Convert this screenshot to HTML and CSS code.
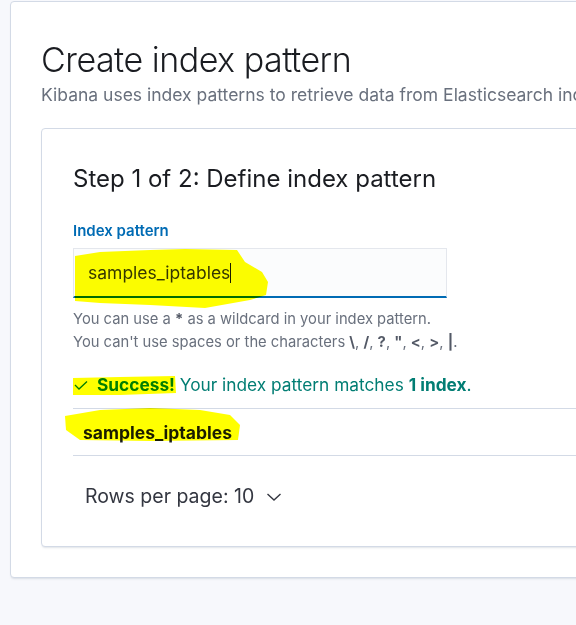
FILE: index.html
```html
<!DOCTYPE html>
<html>
<head>
<meta charset="utf-8">
<link rel="stylesheet" href="styles.css">
</head>
<body>
<div class="page">
  <div class="panel">
    <h1 class="title">Create index pattern</h1>
    <p class="subtitle">Kibana uses index patterns to retrieve data from Elasticsearch indices for things like visualizations.</p>
    <div class="card">
      <h2 class="step">Step 1 of 2: Define index pattern</h2>
      <label class="label">Index pattern</label>
      <div class="input"><span class="value">samples_iptables</span><span class="caret"></span></div>
      <div class="help">
        <div>You can use a <b>*</b> as a wildcard in your index pattern.</div>
        <div>You can't use spaces or the characters <b>\</b>, <b>/</b>, <b>?</b>, <b>"</b>, <b>&lt;</b>, <b>&gt;</b>, <b>|</b>.</div>
      </div>
      <div class="success">
        <svg class="check" width="16" height="16" viewBox="0 0 16 16"><path d="M2 8 L6 12 L14 4.5" fill="none" stroke="#017d73" stroke-width="1.3"/></svg>
        <span><b>Success!</b> Your index pattern matches <b>1 index</b>.</span>
      </div>
      <div class="table">
        <div class="row"><span class="name">samples_iptables</span></div>
      </div>
      <div class="pager">
        <span>Rows per page: 10</span>
        <svg class="chev" width="16" height="16" viewBox="0 0 16 16"><path d="M1.5 5 L8 11 L14.5 5" fill="none" stroke="#343741" stroke-width="1.4"/></svg>
      </div>
    </div>
  </div>
  <svg class="marks" width="576" height="625" viewBox="0 0 576 625">
    <path d="M75 256 L100 252 L150 250 L185 249 L237 250 L245 262 L262 272 L268 282 L266 295 L250 300 L205 308 L150 305 L100 303 L75 301 Z" fill="#ffff00"/>
    <path d="M73 378 L120 377 L175 376 L176 393 L120 395 L73 395 Z" fill="#ffff00"/>
    <path d="M65 416 L100 410 L150 408 L200 410 L230 415 L240 425 L238 440 L150 441 L80 440 L66 430 Z" fill="#ffff00"/>
  </svg>
</div>
</body>
</html>
```
FILE: styles.css
```css
html, body {
  margin: 0;
  padding: 0;
  background: #f7f8fc;
  overflow: hidden;
}
body {
  width: 576px;
  height: 625px;
  font-family: Inter, "Noto Sans", sans-serif;
  color: #343741;
}
.page {
  position: relative;
  width: 576px;
  height: 625px;
  overflow: hidden;
}
.panel {
  margin: 1px 0 0 10px;
  width: 760px;
  background: #fff;
  border: 1px solid #d3dae6;
  border-radius: 4px;
  box-shadow: 0 2px 2px -1px rgba(152,162,179,0.3);
  padding: 38px 30px 30px 30px;
  box-sizing: border-box;
}
.title {
  margin: 0;
  font-size: 34px;
  font-weight: 300;
  line-height: 40px;
  color: #1a1c21;
  letter-spacing: -0.5px;
}
.subtitle {
  margin: 3px 0 0 0;
  font-size: 17.5px;
  line-height: 24px;
  color: #69707d;
  white-space: nowrap;
}
.card {
  margin-top: 21px;
  background: #fff;
  border: 1px solid #d3dae6;
  border-radius: 4px;
  box-shadow: 0 2px 2px -1px rgba(152,162,179,0.3);
  padding: 34px 31px 37px 31px;
}
.step {
  margin: 0;
  font-size: 24px;
  font-weight: 400;
  line-height: 32px;
  color: #1a1c21;
}
.label {
  display: block;
  margin-top: 26px;
  font-size: 15px;
  font-weight: 600;
  line-height: 20px;
  color: #006bb4;
}
.input {
  margin-top: 7px;
  width: 374px;
  height: 50px;
  box-sizing: border-box;
  background: #fbfcfd;
  border: 1px solid #e4e7ed;
  border-bottom: 2px solid #006bb4;
  display: flex;
  align-items: center;
  padding-left: 14px;
  font-size: 17.5px;
  color: #343741;
}
.caret {
  display: inline-block;
  width: 1px;
  height: 20px;
  background: #1a1c21;
}
.help {
  margin-top: 10px;
  font-size: 14.75px;
  line-height: 23px;
  color: #69707d;
}
.help b {
  color: #535966;
  font-weight: 700;
}
.success {
  margin-top: 19px;
  display: flex;
  align-items: center;
  gap: 8px;
  font-size: 17.3px;
  line-height: 24px;
  color: #017d73;
}
.success b {
  font-weight: 700;
}
.table {
  margin-top: 11px;
  margin-right: -31px;
  border-top: 1px solid #d3dae6;
  border-bottom: 1px solid #d3dae6;
}
.row {
  height: 46px;
  display: flex;
  align-items: center;
  padding-left: 10px;
}
.name {
  font-size: 17.5px;
  font-weight: 700;
  color: #1a1c21;
}
.pager {
  margin-top: 27px;
  margin-left: 12px;
  display: flex;
  align-items: center;
  gap: 12px;
  font-size: 19.5px;
  line-height: 26px;
  color: #343741;
}
.chev {
  margin-top: 2px;
}
.marks {
  position: absolute;
  left: 0;
  top: 0;
  mix-blend-mode: multiply;
  pointer-events: none;
}
```
